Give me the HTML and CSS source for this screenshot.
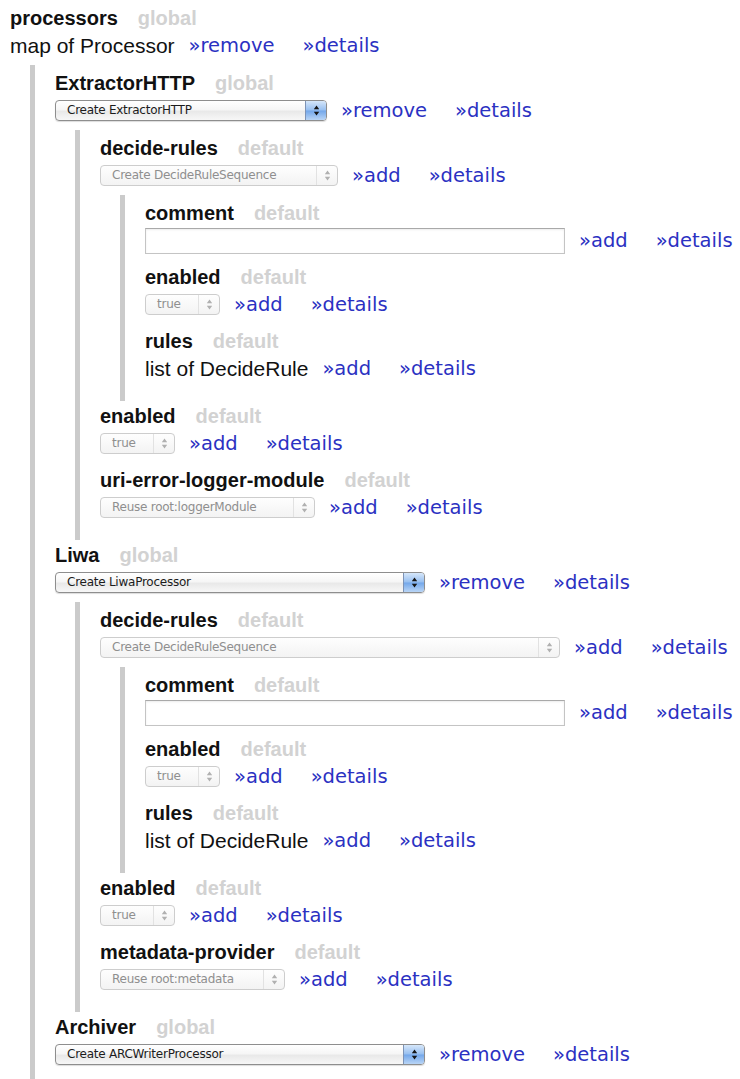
FILE: index.html
```html
<!DOCTYPE html>
<html lang="en">
<head>
<meta charset="utf-8">
<title>Sheet: processors</title>
<link rel="stylesheet" href="styles.css">
</head>
<body>
<div class="fields">

  <div class="field group">
    <div class="head"><span class="name">processors</span><span class="scope">global</span></div>
    <div class="row">
      <span class="type">map of Processor</span>
      <span class="actions"><a href="#">»remove</a><a href="#">»details</a></span>
    </div>

    <div class="fields nest">

      <div class="field group">
        <div class="head"><span class="name">ExtractorHTTP</span><span class="scope">global</span></div>
        <div class="row">
          <span class="select w-272"><span class="select-label">Create ExtractorHTTP</span><span class="select-cap"><svg width="7" height="11" viewBox="0 0 7 11"><path d="M3.5 0.5 L6.2 4.2 H0.8 Z M3.5 10.5 L6.2 6.8 H0.8 Z"/></svg></span></span>
          <span class="actions"><a href="#">»remove</a><a href="#">»details</a></span>
        </div>

        <div class="fields nest">

          <div class="field group">
            <div class="head"><span class="name">decide-rules</span><span class="scope">default</span></div>
            <div class="row">
              <span class="select is-disabled w-238"><span class="select-label">Create DecideRuleSequence</span><span class="select-cap"><svg width="7" height="11" viewBox="0 0 7 11"><path d="M3.5 0.5 L6.2 4.2 H0.8 Z M3.5 10.5 L6.2 6.8 H0.8 Z"/></svg></span></span>
              <span class="actions"><a href="#">»add</a><a href="#">»details</a></span>
            </div>

            <div class="fields nest">
              <div class="field">
                <div class="head"><span class="name">comment</span><span class="scope">default</span></div>
                <div class="row">
                  <input class="text-input" type="text" aria-label="comment">
                  <span class="actions"><a href="#">»add</a><a href="#">»details</a></span>
                </div>
              </div>
              <div class="field">
                <div class="head"><span class="name">enabled</span><span class="scope">default</span></div>
                <div class="row">
                  <span class="select is-disabled w-75"><span class="select-label">true</span><span class="select-cap"><svg width="7" height="11" viewBox="0 0 7 11"><path d="M3.5 0.5 L6.2 4.2 H0.8 Z M3.5 10.5 L6.2 6.8 H0.8 Z"/></svg></span></span>
                  <span class="actions"><a href="#">»add</a><a href="#">»details</a></span>
                </div>
              </div>
              <div class="field">
                <div class="head"><span class="name">rules</span><span class="scope">default</span></div>
                <div class="row">
                  <span class="type">list of DecideRule</span>
                  <span class="actions"><a href="#">»add</a><a href="#">»details</a></span>
                </div>
              </div>
            </div>
          </div>

          <div class="field">
            <div class="head"><span class="name">enabled</span><span class="scope">default</span></div>
            <div class="row">
              <span class="select is-disabled w-75"><span class="select-label">true</span><span class="select-cap"><svg width="7" height="11" viewBox="0 0 7 11"><path d="M3.5 0.5 L6.2 4.2 H0.8 Z M3.5 10.5 L6.2 6.8 H0.8 Z"/></svg></span></span>
              <span class="actions"><a href="#">»add</a><a href="#">»details</a></span>
            </div>
          </div>

          <div class="field">
            <div class="head"><span class="name">uri-error-logger-module</span><span class="scope">default</span></div>
            <div class="row">
              <span class="select is-disabled w-215"><span class="select-label">Reuse root:loggerModule</span><span class="select-cap"><svg width="7" height="11" viewBox="0 0 7 11"><path d="M3.5 0.5 L6.2 4.2 H0.8 Z M3.5 10.5 L6.2 6.8 H0.8 Z"/></svg></span></span>
              <span class="actions"><a href="#">»add</a><a href="#">»details</a></span>
            </div>
          </div>

        </div>
      </div>

      <div class="field group">
        <div class="head"><span class="name">Liwa</span><span class="scope">global</span></div>
        <div class="row">
          <span class="select w-370"><span class="select-label">Create LiwaProcessor</span><span class="select-cap"><svg width="7" height="11" viewBox="0 0 7 11"><path d="M3.5 0.5 L6.2 4.2 H0.8 Z M3.5 10.5 L6.2 6.8 H0.8 Z"/></svg></span></span>
          <span class="actions"><a href="#">»remove</a><a href="#">»details</a></span>
        </div>

        <div class="fields nest">

          <div class="field group">
            <div class="head"><span class="name">decide-rules</span><span class="scope">default</span></div>
            <div class="row">
              <span class="select is-disabled w-460"><span class="select-label">Create DecideRuleSequence</span><span class="select-cap"><svg width="7" height="11" viewBox="0 0 7 11"><path d="M3.5 0.5 L6.2 4.2 H0.8 Z M3.5 10.5 L6.2 6.8 H0.8 Z"/></svg></span></span>
              <span class="actions"><a href="#">»add</a><a href="#">»details</a></span>
            </div>

            <div class="fields nest">
              <div class="field">
                <div class="head"><span class="name">comment</span><span class="scope">default</span></div>
                <div class="row">
                  <input class="text-input" type="text" aria-label="comment">
                  <span class="actions"><a href="#">»add</a><a href="#">»details</a></span>
                </div>
              </div>
              <div class="field">
                <div class="head"><span class="name">enabled</span><span class="scope">default</span></div>
                <div class="row">
                  <span class="select is-disabled w-75"><span class="select-label">true</span><span class="select-cap"><svg width="7" height="11" viewBox="0 0 7 11"><path d="M3.5 0.5 L6.2 4.2 H0.8 Z M3.5 10.5 L6.2 6.8 H0.8 Z"/></svg></span></span>
                  <span class="actions"><a href="#">»add</a><a href="#">»details</a></span>
                </div>
              </div>
              <div class="field">
                <div class="head"><span class="name">rules</span><span class="scope">default</span></div>
                <div class="row">
                  <span class="type">list of DecideRule</span>
                  <span class="actions"><a href="#">»add</a><a href="#">»details</a></span>
                </div>
              </div>
            </div>
          </div>

          <div class="field">
            <div class="head"><span class="name">enabled</span><span class="scope">default</span></div>
            <div class="row">
              <span class="select is-disabled w-75"><span class="select-label">true</span><span class="select-cap"><svg width="7" height="11" viewBox="0 0 7 11"><path d="M3.5 0.5 L6.2 4.2 H0.8 Z M3.5 10.5 L6.2 6.8 H0.8 Z"/></svg></span></span>
              <span class="actions"><a href="#">»add</a><a href="#">»details</a></span>
            </div>
          </div>

          <div class="field">
            <div class="head"><span class="name">metadata-provider</span><span class="scope">default</span></div>
            <div class="row">
              <span class="select is-disabled w-185"><span class="select-label">Reuse root:metadata</span><span class="select-cap"><svg width="7" height="11" viewBox="0 0 7 11"><path d="M3.5 0.5 L6.2 4.2 H0.8 Z M3.5 10.5 L6.2 6.8 H0.8 Z"/></svg></span></span>
              <span class="actions"><a href="#">»add</a><a href="#">»details</a></span>
            </div>
          </div>

        </div>
      </div>

      <div class="field">
        <div class="head"><span class="name">Archiver</span><span class="scope">global</span></div>
        <div class="row">
          <span class="select w-370"><span class="select-label">Create ARCWriterProcessor</span><span class="select-cap"><svg width="7" height="11" viewBox="0 0 7 11"><path d="M3.5 0.5 L6.2 4.2 H0.8 Z M3.5 10.5 L6.2 6.8 H0.8 Z"/></svg></span></span>
          <span class="actions"><a href="#">»remove</a><a href="#">»details</a></span>
        </div>
      </div>

    </div>
  </div>

</div>
</body>
</html>
```

FILE: styles.css
```css
html, body {
  margin: 0;
  background: #ffffff;
}

body {
  padding: 5px 0 0 10px;
  font-family: "Liberation Sans", Arial, sans-serif;
  color: #111111;
  overflow: hidden;
}

/* stacked settings; nested groups get a grey rule on the left */
.fields {
  display: flex;
  flex-direction: column;
}

.field {
  margin-bottom: 10px;
}

.field.group {
  margin-bottom: 2px;
}

.nest {
  margin: 6px 0 0 20px;
  padding: 5px 0 9px 20px;
  border-left: 5px solid #cbcbcb;
}

.head {
  display: flex;
  align-items: baseline;
  height: 27px;
  line-height: 27px;
  white-space: nowrap;
}

.name {
  font-size: 20px;
  font-weight: bold;
  color: #111111;
}

.scope {
  margin-left: 20px;
  font-size: 20px;
  font-weight: bold;
  color: #d2d2d2;
}

.row {
  display: flex;
  align-items: center;
  height: 27px;
  white-space: nowrap;
}

.type {
  font-size: 21px;
  color: #111111;
}

.actions {
  display: flex;
  gap: 28px;
  margin-left: 14px;
  font-family: "DejaVu Sans", "Lucida Grande", sans-serif;
  font-size: 19.5px;
}

.actions a {
  color: #2b31c2;
  text-decoration: none;
}

/* pop-up buttons */
.select {
  display: inline-flex;
  align-items: stretch;
  box-sizing: border-box;
  height: 21px;
  border: 1px solid #8e8e8e;
  border-radius: 4px;
  background: linear-gradient(#ffffff, #f6f6f6 45%, #e9e9e9 55%, #f7f7f7);
  box-shadow: 0 1px 1px rgba(0, 0, 0, 0.14);
  font-family: "DejaVu Sans", "Lucida Grande", sans-serif;
  font-size: 12px;
  letter-spacing: -0.25px;
  color: #1c1c1c;
  overflow: hidden;
}

.select-label {
  flex: 1;
  padding-left: 11px;
  line-height: 19px;
}

.select-cap {
  display: flex;
  align-items: center;
  justify-content: center;
  width: 20px;
  border-left: 1px solid #7d93b6;
  background: linear-gradient(#d6e7fa, #97bff0 48%, #73a7ea 52%, #b9d5f6);
}

.select-cap path {
  fill: #161616;
}

.select.is-disabled {
  border-color: #cdcdcd;
  background: linear-gradient(#fefefe, #f3f3f3);
  box-shadow: none;
  color: #8f8f8f;
}

.select.is-disabled .select-cap {
  border-left-color: #e2e2e2;
  background: none;
}

.select.is-disabled .select-cap path {
  fill: #b0b0b0;
}

.w-75 { width: 75px; }
.w-185 { width: 185px; }
.w-215 { width: 215px; }
.w-238 { width: 238px; }
.w-272 { width: 272px; }
.w-370 { width: 370px; }
.w-460 { width: 460px; }

.text-input {
  box-sizing: border-box;
  width: 420px;
  height: 26px;
  margin: 0;
  padding: 0 4px;
  border: 1px solid #c4c4c4;
  border-top-color: #a9a9a9;
  border-radius: 0;
  background: #ffffff;
  box-shadow: inset 0 1px 2px rgba(0, 0, 0, 0.08);
}
```
